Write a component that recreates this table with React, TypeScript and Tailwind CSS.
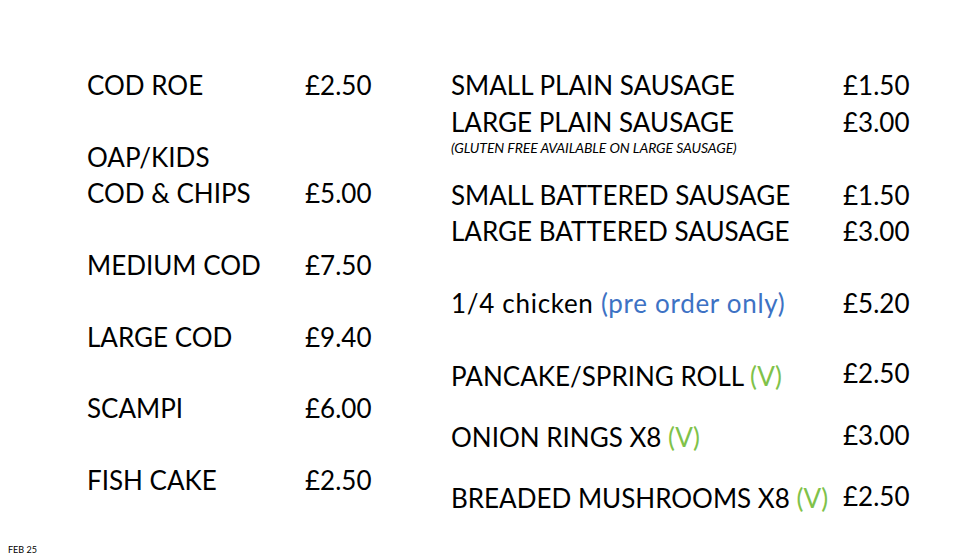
import React from "react";

type Row = { name: React.ReactNode; price?: string; gap?: string; lift?: string };

const V = () => <span className="text-[#7fc24a]">(V)</span>;

const leftRows: Row[] = [
  { name: "COD ROE", price: "£2.50" },
  { name: "OAP/KIDS", gap: "mt-[36px]" },
  { name: "COD & CHIPS", price: "£5.00" },
  { name: "MEDIUM COD", price: "£7.50", gap: "mt-[36px]" },
  { name: "LARGE COD", price: "£9.40", gap: "mt-[36px]" },
  { name: "SCAMPI", price: "£6.00", gap: "mt-[35px]" },
  { name: "FISH CAKE", price: "£2.50", gap: "mt-[36px]" },
];

const MenuRow = ({ row, priceCol }: { row: Row; priceCol: string }) => (
  <div className={`flex items-start h-[36px] leading-[36px] ${row.gap ?? ""}`}>
    <div className={priceCol}>{row.name}</div>
    {row.price && <div className={row.lift ?? ""}>{row.price}</div>}
  </div>
);

export default function App() {
  return (
    <div
      className="relative w-[959px] h-[557px] bg-white text-black overflow-hidden"
      style={{ fontFamily: "Lato, 'Open Sans', sans-serif" }}
    >
      <div className="flex pt-[67px] text-[26px]">
        {/* left column */}
        <div className="flex flex-col pl-[87px] w-[451px]">
          {leftRows.map((r, i) => (
            <MenuRow key={i} row={r} priceCol="w-[218px]" />
          ))}
        </div>

        {/* right column */}
        <div className="flex flex-col">
          <MenuRow row={{ name: "SMALL PLAIN SAUSAGE", price: "£1.50" }} priceCol="w-[392px]" />
          <MenuRow row={{ name: "LARGE PLAIN SAUSAGE", price: "£3.00", gap: "mt-px" }} priceCol="w-[392px]" />
          <div className="italic text-[14px] leading-[16px] tracking-[-0.1px]">
            (GLUTEN FREE AVAILABLE ON LARGE SAUSAGE)
          </div>
          <MenuRow row={{ name: "SMALL BATTERED SAUSAGE", price: "£1.50", gap: "mt-[21px]" }} priceCol="w-[392px]" />
          <MenuRow row={{ name: "LARGE BATTERED SAUSAGE", price: "£3.00" }} priceCol="w-[392px]" />
          <MenuRow
            row={{
              name: (
                <span className="tracking-[0.7px]">
                  1/4 chicken <span className="text-[#3d72c4]">(pre order only)</span>
                </span>
              ),
              price: "£5.20",
              gap: "mt-[36px]",
            }}
            priceCol="w-[392px]"
          />
          <MenuRow
            row={{ name: <>PANCAKE/SPRING ROLL <V /></>, price: "£2.50", gap: "mt-[37px]", lift: "-mt-[3px]" }}
            priceCol="w-[392px]"
          />
          <MenuRow
            row={{ name: <>ONION RINGS X8 <V /></>, price: "£3.00", gap: "mt-[25px]", lift: "-mt-[2px]" }}
            priceCol="w-[392px]"
          />
          <MenuRow
            row={{ name: <>BREADED MUSHROOMS X8 <V /></>, price: "£2.50", gap: "mt-[25px]", lift: "-mt-[2px]" }}
            priceCol="w-[392px]"
          />
        </div>
      </div>

      <div className="absolute left-[8px] top-[545px] text-[9px] leading-[10px]">FEB 25</div>
    </div>
  );
}
